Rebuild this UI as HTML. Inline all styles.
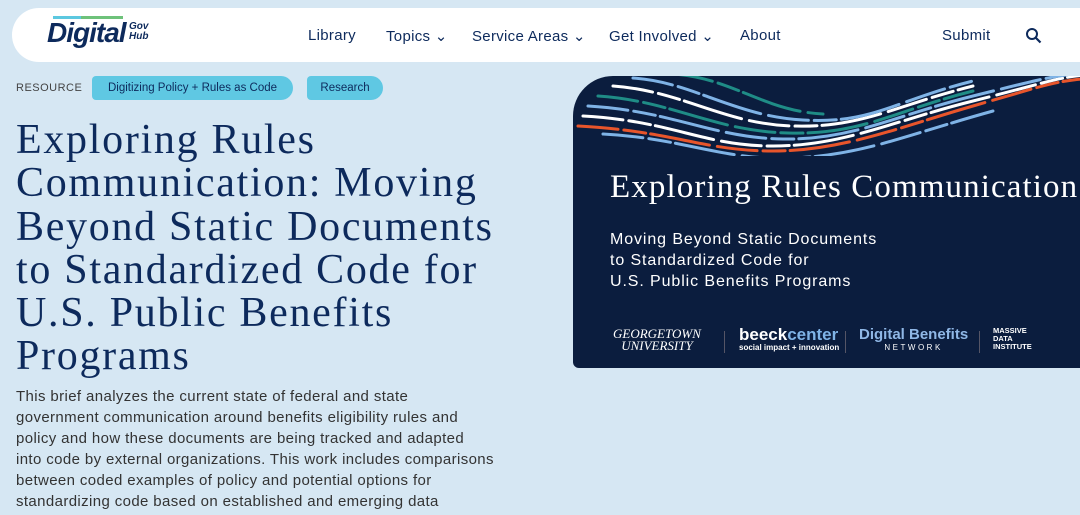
<!DOCTYPE html>
<html><head><meta charset="utf-8"><style>
*{margin:0;padding:0;box-sizing:border-box}
body{width:1080px;height:515px;overflow:hidden;background:#d6e7f3;font-family:"Liberation Sans",sans-serif;position:relative}
.nav{position:absolute;left:12px;top:8px;width:1100px;height:54px;background:#fff;border-radius:27px}
.logo{position:absolute;left:47px;top:17px;font:italic bold 28px "Liberation Sans",sans-serif;color:#0d2a5c;letter-spacing:-1px}
.logo small{position:absolute;left:82px;top:5px;font:bold italic 10px/10px "Liberation Sans",sans-serif;letter-spacing:0}
.logo i{position:absolute;left:6px;top:-1px;width:70px;height:3px;background:linear-gradient(90deg,#5cc8e0 40%,#6ec27a 40%)}
.nl{position:absolute;top:27px;font-size:15px;color:#0d2a5c;letter-spacing:.3px}
.rs{position:absolute;left:16px;top:82px;font-size:11px;color:#444;letter-spacing:.5px}
.tag{position:absolute;top:76px;height:24px;line-height:24px;background:#5fc8e3;border-radius:4px 12px 12px 4px;font-size:11.5px;color:#0d2a5c;text-align:center}
h1{position:absolute;left:16px;top:119px;font:400 42px/43.3px "Liberation Serif",serif;color:#0d2a5c;letter-spacing:1.7px;white-space:nowrap}
p{position:absolute;left:16px;top:387px;font-size:15px;line-height:20.9px;color:#333;letter-spacing:.38px;white-space:nowrap}
.card{position:absolute;left:573px;top:76px;width:520px;height:292px;background:#0b1d3e;border-radius:40px 0 0 6px;overflow:hidden}
.ct{position:absolute;left:37px;top:93px;font:33px "Liberation Serif",serif;color:#fff;white-space:nowrap;letter-spacing:1.1px}
.cs{position:absolute;left:37px;top:153px;font-size:16px;line-height:21px;color:#fff;letter-spacing:.9px;white-space:nowrap}
.lg{position:absolute;top:250px;color:#fff}
</style></head><body>
<div class="nav"></div>
<div class="logo"><i></i>Digital<small>Gov<br>Hub</small></div>
<div class="nl" style="left:308px">Library</div>
<div class="nl" style="left:386px">Topics ⌄</div>
<div class="nl" style="left:472px">Service Areas ⌄</div>
<div class="nl" style="left:609px">Get Involved ⌄</div>
<div class="nl" style="left:740px">About</div>
<div class="nl" style="left:942px">Submit</div>
<svg style="position:absolute;left:1025px;top:27px" width="17" height="17" viewBox="0 0 17 17"><circle cx="7" cy="7" r="5" fill="none" stroke="#0d2a5c" stroke-width="2"/><path d="M11 11l4.5 4.5" stroke="#0d2a5c" stroke-width="2.2"/></svg>
<div class="rs">RESOURCE</div>
<div class="tag" style="left:92px;width:201px">Digitizing Policy + Rules as Code</div>
<div class="tag" style="left:307px;width:76px">Research</div>
<h1>Exploring Rules<br>Communication: Moving<br>Beyond Static Documents<br>to Standardized Code for<br>U.S. Public Benefits<br>Programs</h1>
<p>This brief analyzes the current state of federal and state<br>government communication around benefits eligibility rules and<br>policy and how these documents are being tracked and adapted<br>into code by external organizations. This work includes comparisons<br>between coded examples of policy and potential options for<br>standardizing code based on established and emerging data</p>
<div class="card">
<svg width="520" height="80" style="position:absolute;left:0;top:0" fill="none" stroke-linecap="round">
<g stroke-width="3" stroke-dasharray="40 6 22 5 60 8">
<path d="M5 50 C100 55 130 75 200 75 S330 50 400 30 S480 5 520 2" stroke="#e8552b"/>
<path d="M10 40 C100 45 130 70 200 70 S320 45 400 25 S480 2 520 -2" stroke="#fff"/>
<path d="M15 30 C100 35 140 62 210 63 S320 40 400 20 S480 0 520 -4" stroke="#7fb3e6"/>
<path d="M25 20 C100 25 140 55 215 57 S320 35 400 15" stroke="#1f8c86"/>
<path d="M40 10 C110 15 150 48 220 50 S320 30 400 10" stroke="#fff"/>
<path d="M60 2 C120 6 160 40 230 44 S320 25 400 5" stroke="#7fb3e6"/>
<path d="M30 58 C110 62 150 85 220 82 S330 60 420 35" stroke="#7fb3e6"/>
<path d="M100 -2 C160 2 190 35 250 38" stroke="#1f8c86"/>
</g></svg>
<div class="ct">Exploring Rules Communication</div>
<div class="cs">Moving Beyond Static Documents<br>to Standardized Code for<br>U.S. Public Benefits Programs</div>
<div class="lg" style="left:40px;top:252px;font:italic 13px/12px 'Liberation Serif',serif;text-align:center">GEORGETOWN<br>UNIVERSITY</div>
<div class="lg" style="left:151px;top:255px;height:22px;border-left:1px solid #556"></div>
<div class="lg" style="left:166px;top:251px;font:bold 17px/16px 'Liberation Sans',sans-serif">beeck<span style="color:#7fb3e6">center</span><div style="font-size:8px;line-height:9px">social impact + innovation</div></div>
<div class="lg" style="left:272px;top:255px;height:22px;border-left:1px solid #556"></div>
<div class="lg" style="left:286px;top:251px;font:bold 15px/16px 'Liberation Sans',sans-serif;color:#8fb7e6;text-align:center">Digital Benefits<div style="font:8px/9px 'Liberation Sans';letter-spacing:2.5px;color:#fff">NETWORK</div></div>
<div class="lg" style="left:406px;top:255px;height:22px;border-left:1px solid #556"></div>
<div class="lg" style="left:420px;top:251px;font:bold 7.5px/8px 'Liberation Sans',sans-serif">MASSIVE<br>DATA<br>INSTITUTE</div>
</div>
</body></html>
